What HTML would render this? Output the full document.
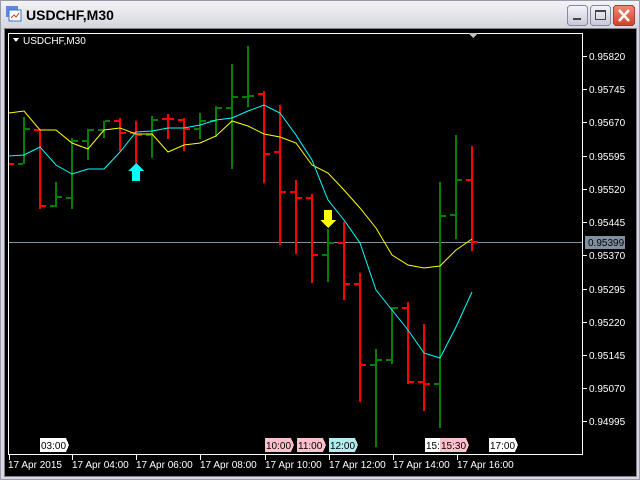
<!DOCTYPE html>
<html><head><style>
body{margin:0;width:640px;height:480px;overflow:hidden;background:#d6d6de;font-family:"Liberation Sans",sans-serif}
</style></head><body>
<svg width="640" height="480" xmlns="http://www.w3.org/2000/svg" style="position:absolute;left:0;top:0" shape-rendering="crispEdges">
<defs>
<linearGradient id="tb" x1="0" y1="0" x2="0" y2="1"><stop offset="0" stop-color="#f4f4f8"/><stop offset="1" stop-color="#d4d4dc"/></linearGradient>
<linearGradient id="cl" x1="0" y1="0" x2="0" y2="1"><stop offset="0" stop-color="#f08a70"/><stop offset="1" stop-color="#d0402a"/></linearGradient>
<linearGradient id="bt" x1="0" y1="0" x2="0" y2="1"><stop offset="0" stop-color="#f4f4fa"/><stop offset="1" stop-color="#c8c8d8"/></linearGradient>
</defs>
<rect x="0" y="0" width="640" height="480" fill="#d8d8e0"/>
<rect x="0" y="0" width="640" height="29" fill="url(#tb)"/>
<rect x="0.5" y="0.5" width="639" height="479" fill="none" stroke="#9a9aa8"/>
<!-- icon -->
<rect x="6" y="6" width="12" height="11" fill="#5a8ad8"/>
<rect x="9" y="10" width="12" height="11" fill="#fff" stroke="#4070c0"/>
<polyline points="11,18 14,15 16,17 19,13" fill="none" stroke="#e04020"/>
<text x="26" y="20" font-size="14" font-weight="bold" fill="#000">USDCHF,M30</text>
<!-- buttons -->
<rect x="567.5" y="5.5" width="20" height="20" rx="3" fill="url(#bt)" stroke="#8888a0"/>
<rect x="573" y="18" width="8" height="2" fill="#444"/>
<rect x="590.5" y="5.5" width="20" height="20" rx="3" fill="url(#bt)" stroke="#8888a0"/>
<rect x="595.5" y="10.5" width="10" height="9" fill="none" stroke="#444"/><rect x="595" y="10" width="11" height="2" fill="#444"/>
<rect x="613.5" y="5.5" width="21" height="20" rx="3" fill="url(#cl)" stroke="#a04040"/>
<path d="M619 10 L629 21 M629 10 L619 21" stroke="#fff" stroke-width="2.5" shape-rendering="auto"/>
<!-- chart area -->
<rect x="5" y="29" width="631" height="447" fill="#000"/>
<rect x="4.5" y="28.5" width="632" height="448" fill="none" stroke="#808090"/>
<rect x="8.5" y="33.5" width="574" height="421" fill="none" stroke="#fff"/>
<path d="M13 38 L19 38 L16 42 Z" fill="#fff"/>
<text x="23" y="44" font-size="10" fill="#fff">USDCHF,M30</text>
<path d="M468 33 L478 33 L473 38 Z" fill="#c0c0c0"/>
<!-- price line -->
<rect x="9" y="242" width="573" height="1" fill="#8090a0"/>
<!-- bars -->
<g stroke-width="2" id="bars"></g>
<g fill="none" stroke-width="1" shape-rendering="auto">
<polyline stroke="#ffff00" points="9,113 24,111 40,130 56,130 72,143 88,149 104,130 120,128 136,134 152,134 168,152 184,145 200,143 216,136 232,121 248,126 264,134 280,137 296,143 312,165 328,173 344,190 360,208 376,228 392,255 408,265 424,268 440,266 456,250 472,239"/>
<polyline stroke="#00ffff" points="9,156 24,155 40,147 56,165 72,174 88,169 104,169 120,152 136,132 152,131 168,128 184,128 200,125 216,120 232,118 248,111 264,105 280,113 296,135 312,160 328,200 344,220 360,243 376,290 392,310 408,330 424,353 440,358 456,327 472,292"/>
</g>
<!-- arrows -->
<path d="M136 163 L144 171 L140 171 L140 181 L132 181 L132 171 L128 171 Z" fill="#00ffff"/>
<path d="M328 228 L336 220 L332 220 L332 210 L324 210 L324 220 L320 220 Z" fill="#ffff00"/>
<!-- right axis -->
<g fill="#fff" font-size="10">
<text x="589" y="60">0.95820</text><text x="589" y="93">0.95745</text><text x="589" y="126">0.95670</text>
<text x="589" y="160">0.95595</text><text x="589" y="193">0.95520</text><text x="589" y="226">0.95445</text>
<text x="589" y="259">0.95370</text><text x="589" y="293">0.95295</text><text x="589" y="326">0.95220</text>
<text x="589" y="359">0.95145</text><text x="589" y="392">0.95070</text><text x="589" y="425">0.94995</text>
</g>
<g fill="#fff">
<rect x="583" y="56" width="4" height="1"/><rect x="583" y="89" width="4" height="1"/><rect x="583" y="122" width="4" height="1"/>
<rect x="583" y="156" width="4" height="1"/><rect x="583" y="189" width="4" height="1"/><rect x="583" y="222" width="4" height="1"/>
<rect x="583" y="255" width="4" height="1"/><rect x="583" y="289" width="4" height="1"/><rect x="583" y="322" width="4" height="1"/>
<rect x="583" y="355" width="4" height="1"/><rect x="583" y="388" width="4" height="1"/><rect x="583" y="421" width="4" height="1"/>
</g>
<rect x="585" y="236" width="40" height="13" fill="#8090a0"/>
<text x="588" y="246" font-size="10" fill="#000">0.95399</text>
<!-- bottom axis -->
<g fill="#fff">
<rect x="9" y="455" width="1" height="5"/><rect x="72" y="455" width="1" height="5"/><rect x="136" y="455" width="1" height="5"/>
<rect x="200" y="455" width="1" height="5"/><rect x="265" y="455" width="1" height="5"/><rect x="329" y="455" width="1" height="5"/>
<rect x="393" y="455" width="1" height="5"/><rect x="457" y="455" width="1" height="5"/>
</g>
<g fill="#fff" font-size="10">
<text x="8" y="468">17 Apr 2015</text><text x="72" y="468">17 Apr 04:00</text><text x="136" y="468">17 Apr 06:00</text>
<text x="200" y="468">17 Apr 08:00</text><text x="265" y="468">17 Apr 10:00</text><text x="329" y="468">17 Apr 12:00</text>
<text x="393" y="468">17 Apr 14:00</text><text x="457" y="468">17 Apr 16:00</text>
</g>
<!-- time tags -->
<g font-size="10" fill="#000">
<path d="M40 438 h26 l3 7 l-3 7 h-26 Z" fill="#fff"/><text x="41" y="449">03:00</text>
<path d="M265 438 h26 l3 7 l-3 7 h-26 Z" fill="#ffc0cb"/><text x="266" y="449">10:00</text>
<path d="M297 438 h26 l3 7 l-3 7 h-26 Z" fill="#ffc0cb"/><text x="298" y="449">11:00</text>
<path d="M329 438 h26 l3 7 l-3 7 h-26 Z" fill="#b0eeee"/><text x="330" y="449">12:00</text>
<path d="M425 438 h15 v14 h-15 Z" fill="#fff"/><text x="426" y="449">15:</text>
<path d="M440 438 h26 l3 7 l-3 7 h-26 Z" fill="#ffc0cb"/><text x="441" y="449">15:30</text>
<path d="M489 438 h26 l3 7 l-3 7 h-26 Z" fill="#fff"/><text x="490" y="449">17:00</text>
</g>
<g id="b2"></g>
</svg>
<script>
var d=[[24,'g',117,164,164,129],[40,'r',129,209,130,206],[56,'g',182,207,206,197],[72,'g',138,209,198,141],[88,'g',129,160,141,130],[104,'g',121,138,130,121],[120,'r',118,151,121,133],[136,'r',121,163,133,135],[152,'g',116,158,135,120],[168,'r',114,139,119,119],[184,'r',118,151,120,129],[200,'g',113,139,129,121],[216,'g',106,137,121,108],[232,'g',64,169,108,97],[248,'g',46,107,97,96],[264,'r',91,183,94,154],[280,'r',105,245,152,192],[296,'r',180,254,192,198],[312,'r',194,283,198,255],[328,'g',229,282,255,243],[344,'r',222,300,243,284],[360,'r',273,402,284,365],[376,'g',349,447,365,360],[392,'g',307,364,360,308],[408,'r',302,384,308,382],[424,'r',324,411,382,384],[440,'g',182,428,384,216],[456,'g',135,239,215,180],[472,'r',146,251,180,242]];
var s='<rect x="9" y="163" width="5" height="2" fill="#ff0000"/>';
d.forEach(function(b){var c=b[1]=='g'?'#008000':'#ff0000';
s+='<rect x="'+(b[0]-1)+'" y="'+b[2]+'" width="2" height="'+(b[3]-b[2])+'" fill="'+c+'"/>';
s+='<rect x="'+(b[0]-6)+'" y="'+(b[4]-1)+'" width="5" height="2" fill="'+c+'"/>';
s+='<rect x="'+(b[0]+1)+'" y="'+(b[5]-1)+'" width="5" height="2" fill="'+c+'"/>';});
document.getElementById('bars').innerHTML=s;
</script>
</body></html>
